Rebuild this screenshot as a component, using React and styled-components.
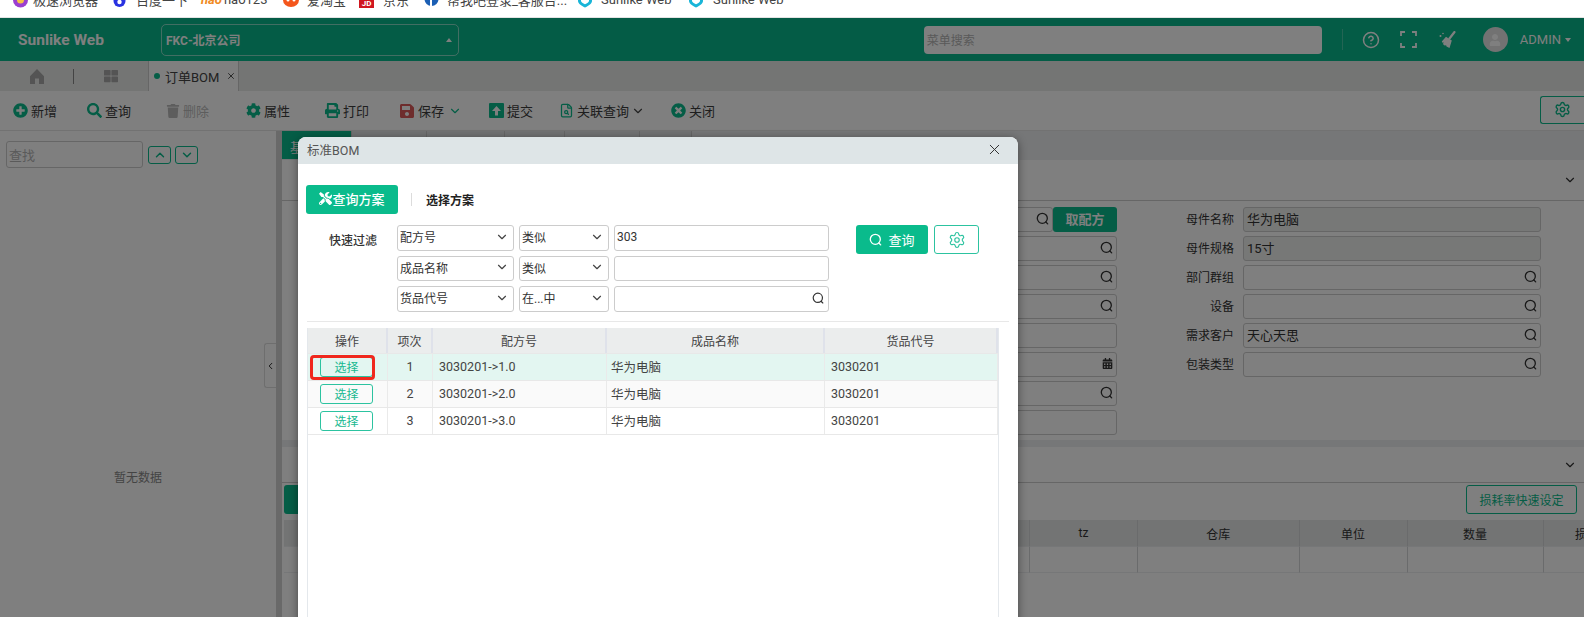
import React from "react";
import styled, { createGlobalStyle } from "styled-components";
import {
  FaPlusCircle,
  FaSearch,
  FaTrash,
  FaCog,
  FaPrint,
  FaSave,
  FaTimesCircle,
  FaThLarge,
  FaUser,
  FaTools,
  FaCalendarAlt,
} from "react-icons/fa";
import {
  ChevronDown,
  ChevronUp,
  ChevronLeft,
  CircleHelp,
  FileSearch,
  Settings,
  X,
} from "lucide-react";

const GREEN = "#0abb8c";
const FONT = `Roboto, "Noto Sans CJK SC", sans-serif`;

const GlobalStyle = createGlobalStyle`
  html, body {
    margin: 0;
    padding: 0;
    height: 100%;
    overflow: hidden;
    background: #fff;
    font-family: ${FONT};
    font-size: 12px;
    color: #3c3c3c;
  }
  * { box-sizing: border-box; }
`;

const Page = styled.div`
  width: 1584px;
  height: 617px;
  display: flex;
  flex-direction: column;
  overflow: hidden;
`;

/* browser bookmark bar, cut off by the top of the capture */
const BookmarkBar = styled.div`
  height: 18px;
  flex: none;
  overflow: hidden;
  background: #fff;
  border-bottom: 1px solid #e3e3e3;
  display: flex;
  padding-left: 13px;
`;

const Bookmark = styled.div`
  width: ${(p) => p.$w}px;
  flex: none;
  height: 20px;
  margin-top: -11px;
  display: flex;
  align-items: center;
  gap: ${(p) => p.$gap || 5}px;
  font-size: 13px;
  white-space: nowrap;
  color: #444;
`;

const HaoMark = styled.span`
  color: #f08a24;
  font-size: 13px;
  font-weight: 700;
  font-style: italic;
`;

const JdMark = styled.span`
  width: 15px;
  height: 18px;
  background: #d0161f;
  color: #fff;
  font-size: 8px;
  font-weight: 700;
  display: flex;
  align-items: flex-end;
  justify-content: center;
  flex: none;
`;

const Shell = styled.div`
  position: relative;
  flex: 1;
  min-height: 0;
  display: flex;
  flex-direction: column;
  background: #fff;
`;

const Header = styled.header`
  height: 43px;
  flex: none;
  background: #08b88c;
  display: flex;
  align-items: center;
  padding-left: 18px;
  color: #fff;
`;

const Brand = styled.div`
  width: 143px;
  font-size: 15.5px;
  font-weight: 700;
`;

const CompanySelect = styled.div`
  width: 298px;
  height: 32px;
  border: 1px solid rgba(255, 255, 255, 0.5);
  border-radius: 5px;
  display: flex;
  align-items: center;
  justify-content: space-between;
  padding: 0 6px 0 4px;
  font-size: 12px;
  font-weight: 700;
  margin-right: auto;
`;

const Caret = styled.span`
  width: 0;
  height: 0;
  border-left: 3px solid transparent;
  border-right: 3px solid transparent;
  ${(p) => (p.$up ? "border-bottom" : "border-top")}: 4px solid #fff;
`;

const MenuSearch = styled.div`
  width: 398px;
  height: 28px;
  background: #fff;
  border-radius: 4px;
  color: #b4b4b4;
  font-size: 12px;
  padding-left: 3px;
  display: flex;
  align-items: center;
`;

const HeaderDivider = styled.div`
  width: 1px;
  height: 21px;
  background: rgba(255, 255, 255, 0.25);
  margin: 0 19px 0 20px;
`;

const HeaderIcon = styled.div`
  width: 18px;
  height: 18px;
  margin-right: 20px;
  display: flex;
  align-items: center;
  justify-content: center;
`;

const Avatar = styled.div`
  width: 25px;
  height: 25px;
  border-radius: 50%;
  background: #e4e4e4;
  color: #fff;
  display: flex;
  align-items: center;
  justify-content: center;
  margin-left: 7px;
`;

const AdminName = styled.div`
  margin-left: 12px;
  font-size: 13px;
  display: flex;
  align-items: center;
  gap: 4px;
  margin-right: 13px;
`;

const TabBar = styled.div`
  height: 30px;
  flex: none;
  background: #e8ebe8;
  display: flex;
  align-items: center;
`;

const TabIconBox = styled.div`
  width: 74px;
  height: 15px;
  display: flex;
  align-items: center;
  justify-content: center;
  color: #a8a8a8;
  ${(p) => p.$line && "border-right: 1px solid #888;"}
`;

const PageTab = styled.div`
  height: 30px;
  width: 91px;
  background: #fff;
  border-left: 1px solid #ccc;
  border-right: 1px solid #ccc;
  display: flex;
  align-items: center;
  padding-left: 5px;
  gap: 5px;
  font-size: 13px;
  color: #444;
`;

const Dot = styled.span`
  width: 6px;
  height: 6px;
  border-radius: 50%;
  background: ${GREEN};
  flex: none;
`;

const Toolbar = styled.div`
  height: 40px;
  flex: none;
  background: #fff;
  display: flex;
  align-items: center;
  padding-left: 13px;
  border-bottom: 1px solid #e4e4e4;
  position: relative;
`;

const ToolItem = styled.div`
  width: ${(p) => p.$w}px;
  flex: none;
  display: flex;
  align-items: center;
  gap: 3px;
  font-size: 13px;
  color: ${(p) => (p.$off ? "#bbb" : "#3c3c3c")};
  svg.tool { color: ${(p) => p.$color || GREEN}; flex: none; }
`;

const ToolSettings = styled.div`
  margin-left: auto;
  width: 44px;
  height: 28px;
  border: 1px solid ${GREEN};
  border-right: none;
  border-radius: 3px 0 0 3px;
  color: ${GREEN};
  display: flex;
  align-items: center;
  justify-content: center;
  margin-top: -2px;
`;

const Main = styled.div`
  flex: 1;
  min-height: 0;
  display: flex;
`;

const LeftPanel = styled.aside`
  width: 276px;
  flex: none;
  display: flex;
  flex-direction: column;
  padding: 10px 6px 0;
  background: #fff;
`;

const FindRow = styled.div`
  display: flex;
  align-items: center;
  gap: 4px;
`;

const FindInput = styled.div`
  width: 137px;
  height: 27px;
  border: 1px solid #ccc;
  border-radius: 3px;
  color: #b4b4b4;
  font-size: 13px;
  padding-left: 2px;
  display: flex;
  align-items: center;
  margin-right: 1px;
`;

const StepButton = styled.div`
  width: 23px;
  height: 18px;
  border: 1px solid ${GREEN};
  border-radius: 3px;
  color: ${GREEN};
  display: flex;
  align-items: center;
  justify-content: center;
`;

const EmptyText = styled.div`
  flex: 1;
  display: flex;
  justify-content: center;
  padding-top: 300px;
  color: #888;
  font-size: 12px;
`;

const Splitter = styled.div`
  width: 6px;
  flex: none;
  background: #d2d2d2;
  position: relative;
`;

const CollapseHandle = styled.div`
  position: absolute;
  left: -12px;
  top: 212px;
  width: 12px;
  height: 45px;
  background: #fff;
  border: 1px solid #ddd;
  border-right: none;
  border-radius: 3px 0 0 3px;
  color: #222;
  display: flex;
  align-items: center;
  justify-content: center;
`;

const Content = styled.div`
  flex: 1;
  min-width: 0;
  background: #eceef0;
  display: flex;
  flex-direction: column;
  overflow: hidden;
`;

const ContentTabs = styled.div`
  height: 29px;
  flex: none;
  display: flex;
`;

const ContentTab = styled.div`
  width: ${(p) => p.$w}px;
  height: ${(p) => (p.$active ? 28 : 18)}px;
  flex: none;
  background: ${(p) => (p.$active ? GREEN : "#e4e6e8")};
  border-right: 1px solid #ccc;
  color: #fff;
  font-size: 13px;
  padding: 6px 0 0 8px;
`;

const Card = styled.section`
  background: #fff;
  flex: none;
`;

const CardTitle = styled.div`
  height: ${(p) => p.$h}px;
  border-bottom: 1px solid #ccc;
  display: flex;
  align-items: center;
  justify-content: flex-end;
  padding-right: 7px;
  color: #333;
`;

const FormGrid = styled.div`
  display: grid;
  grid-template-columns: 1fr 424px;
  grid-auto-rows: 25px;
  row-gap: 4px;
  padding: 6px 43px 5px 0;
`;

const LeftCell = styled.div`
  grid-column: 1;
  justify-self: end;
  width: 300px;
  display: flex;
`;

const FormField = styled.div`
  flex: 1;
  min-width: 0;
  height: 25px;
  border: 1px solid #ccc;
  border-radius: 3px;
  background: ${(p) => (p.$readonly ? "#eef0ee" : "#fff")};
  display: flex;
  align-items: center;
  justify-content: space-between;
  padding: 0 3px 2px 3px;
  font-size: 13px;
  color: #333;
`;

const FetchButton = styled.div`
  width: 64px;
  height: 25px;
  flex: none;
  background: ${GREEN};
  border-radius: 3px;
  color: #fff;
  font-size: 13px;
  font-weight: 700;
  padding-bottom: 2px;
  display: flex;
  align-items: center;
  justify-content: center;
`;

const RightCell = styled.div`
  grid-column: 2;
  display: flex;
  align-items: center;
`;

const FieldLabel = styled.label`
  width: 117px;
  flex: none;
  text-align: right;
  margin: 0 9px 2px 0;
  font-size: 12px;
  color: #333;
`;

const Band = styled.div`
  height: ${(p) => p.$h || 7}px;
  flex: none;
`;

const ActionRow = styled.div`
  height: 37px;
  display: flex;
  justify-content: space-between;
  align-items: flex-start;
  padding: 2px 7px 0 2px;
`;

const GreenBlock = styled.div`
  width: 60px;
  height: 29px;
  background: ${GREEN};
  border-radius: 3px;
`;

const GhostButton = styled.div`
  width: 111px;
  height: 29px;
  border: 1px solid ${GREEN};
  border-radius: 3px;
  color: ${GREEN};
  font-size: 12px;
  display: flex;
  align-items: center;
  justify-content: center;
`;

const BackTable = styled.div`
  margin-left: 2px;
  display: grid;
  grid-template-columns: 746px 108px 161.5px 108px 136px 100px;
  width: 1400px;
`;

const BackCell = styled.div`
  height: ${(p) => (p.$head ? 27 : 26)}px;
  background: ${(p) => (p.$head ? "#e6e9e9" : "#fff")};
  border-right: 1px solid #d4d6d8;
  border-bottom: 1px solid #eceef0;
  display: flex;
  align-items: center;
  justify-content: center;
  font-size: 12px;
  color: #333;
`;

const Overlay = styled.div`
  position: absolute;
  inset: 0;
  background: rgba(0, 0, 0, 0.5);
`;

const Modal = styled.div`
  width: 720px;
  height: 600px;
  margin: 119px 0 0 298px;
  background: #fff;
  border-radius: 8px 8px 0 0;
  box-shadow: 0 2px 10px rgba(0, 0, 0, 0.45);
`;

const ModalHeader = styled.div`
  height: 27px;
  background: #dee5e7;
  border-radius: 8px 8px 0 0;
  display: flex;
  align-items: center;
  justify-content: space-between;
  padding: 0 15px 3px 9px;
  font-size: 12.5px;
  color: #555;
`;

const SchemeTabs = styled.div`
  display: flex;
  align-items: center;
  margin: 21px 0 0 8px;
`;

const SchemeActive = styled.div`
  width: 92px;
  height: 29px;
  background: ${GREEN};
  border-radius: 3px;
  color: #fff;
  font-size: 13px;
  font-weight: 500;
  padding-bottom: 2px;
  display: flex;
  align-items: center;
  justify-content: center;
`;

const SchemeDivider = styled.div`
  width: 1px;
  height: 13px;
  background: #dcdcdc;
  margin: 0 14px 0 13px;
`;

const SchemeLink = styled.div`
  font-size: 12px;
  font-weight: 700;
  color: #222;
  padding-bottom: 1px;
`;

const FilterArea = styled.div`
  display: flex;
  margin: 11px 0 0 31px;
  padding-bottom: 9px;
`;

const FilterLabel = styled.div`
  width: 68px;
  flex: none;
  padding-top: 6px;
  font-size: 12px;
  font-weight: 500;
  color: #333;
`;

const FilterRows = styled.div`
  display: flex;
  flex-direction: column;
  gap: 5px;
`;

const FilterRow = styled.div`
  display: flex;
  gap: 5px;
`;

const SelectBox = styled.div`
  width: ${(p) => p.$w}px;
  height: 25.5px;
  border: 1px solid #ccc;
  border-radius: 3px;
  display: flex;
  align-items: center;
  justify-content: space-between;
  padding: 0 4px 2px 2px;
  font-size: 12px;
  color: #333;
`;

const FilterActions = styled.div`
  display: flex;
  gap: 6px;
  margin-left: 27px;
`;

const QueryButton = styled.div`
  width: 72px;
  height: 29px;
  background: ${GREEN};
  border-radius: 3px;
  color: #fff;
  font-size: 13px;
  display: flex;
  align-items: center;
  justify-content: center;
  gap: 6px;
`;

const GearButton = styled.div`
  width: 45px;
  height: 29px;
  border: 1px solid #2cc3a0;
  border-radius: 3px;
  color: #2cc3a0;
  display: flex;
  align-items: center;
  justify-content: center;
`;

const ModalDivider = styled.div`
  height: 1px;
  background: #e8e8e8;
  margin: 0 9px;
`;

const TableWrap = styled.div`
  margin: 6px 0 0 9px;
  width: 692px;
  height: 300px;
  border-left: 1px solid #e4e8ec;
  border-right: 1px solid #e4e8ec;
`;

const TableRow = styled.div`
  display: grid;
  grid-template-columns: 80px 45px 174px 218px 1fr;
  height: ${(p) => (p.$head ? 26 : 27)}px;
  background: ${(p) => p.$bg || "#fff"};
  border-bottom: 1px solid #e8e8e8;
`;

const HeadCell = styled.div`
  background: #ebeded;
  border-right: 2px solid #dfe2ea;
  display: flex;
  align-items: center;
  justify-content: center;
  font-size: 12px;
  color: #444;
`;

const Cell = styled.div`
  position: relative;
  border-right: 1px solid #eaeaea;
  display: flex;
  align-items: center;
  justify-content: ${(p) => (p.$center ? "center" : "flex-start")};
  padding-left: ${(p) => (p.$center ? 0 : p.$pad || 6)}px;
  font-size: 12.5px;
  color: #444;
`;

const PickButton = styled.div`
  width: 53px;
  height: 20px;
  margin-right: 2px;
  border: 1px solid #2cc3a0;
  border-radius: 3px;
  color: #18b890;
  font-size: 12px;
  display: flex;
  align-items: center;
  justify-content: center;
`;

const RedMark = styled.div`
  position: absolute;
  left: 2px;
  top: 1px;
  width: 65px;
  height: 25px;
  border: 3px solid #f0281e;
  border-radius: 4px;
  pointer-events: none;
`;

const Lens = ({ size = 13 }) => (
  <svg width={size} height={size} viewBox="0 0 14 14" fill="none" stroke="currentColor" strokeWidth="1.4">
    <circle cx="6.800" cy="6.800" r="5.400" />
    <path d="M10.600 10.800 12.600 12.800" strokeLinecap="round" />
  </svg>
);

const Shield = () => (
  <svg width="16" height="18" viewBox="0 0 16 18">
    <path d="M1 1h14v10c0 3-4 5-7 6.500C5 16 1 14 1 11z" fill="#19b5d8" />
    <path d="M4 6h8v5c0 1-2 2.500-4 3.200C6 13.500 4 12 4 11z" fill="#fff" />
  </svg>
);

const SubmitIcon = () => (
  <svg className="tool" width="15" height="15" viewBox="0 0 15 15">
    <rect width="15" height="15" rx="1" fill="currentColor" />
    <path d="M7.500 3 12 8H9v4.500H6V8H3z" fill="#fff" />
  </svg>
);

const FullscreenIcon = () => (
  <svg width="17" height="17" viewBox="0 0 17 17" fill="none" stroke="currentColor" strokeWidth="1.800">
    <path d="M1 5V1h4M12 1h4v4M16 12v4h-4M5 16H1v-4" />
  </svg>
);

const BroomIcon = () => (
  <svg width="18" height="18" viewBox="0 0 18 18" fill="currentColor">
    <path d="M16.500 1 11.500 7.500" stroke="currentColor" strokeWidth="2.200" fill="none" strokeLinecap="round" />
    <path d="M8 5.800 13.800 9.600 11.500 17 8.500 15.500 8 14 7 14.800 4.800 13 6 11.500 4.500 11.800 3.800 10.500Z" />
    <circle cx="2.500" cy="5" r="1" />
    <circle cx="5" cy="2.500" r="0.800" />
  </svg>
);

const HomeIcon = () => (
  <svg width="16" height="17" viewBox="0 0 16 17" fill="currentColor">
    <path d="M8 1 15 8.200V16H10V10.500H6V16H1V8.200Z" />
  </svg>
);

const bookmarks = [
  { w: 100, label: "极速浏览器", icon: (
    <svg width="15" height="18" viewBox="0 0 15 18">
      <circle cx="7.500" cy="10" r="7.500" fill="#9a3fd0" />
      <circle cx="7.500" cy="10" r="3.500" fill="#f6c344" />
    </svg>
  ) },
  { w: 88, label: "百度一下", gap: 10, icon: (
    <svg width="13" height="18" viewBox="0 0 13 18">
      <circle cx="6.500" cy="11" r="6" fill="#2932e1" />
      <circle cx="6.500" cy="12" r="2.200" fill="#fff" />
    </svg>
  ) },
  { w: 82, label: "hao123", gap: 2, icon: <HaoMark>hao</HaoMark> },
  { w: 76, label: "爱淘宝", gap: 8, icon: (
    <svg width="16" height="18" viewBox="0 0 16 18">
      <ellipse cx="8" cy="10" rx="8" ry="7" fill="#f4561c" />
      <circle cx="5" cy="10" r="1.500" fill="#fff" />
      <circle cx="11" cy="10" r="1.500" fill="#fff" />
    </svg>
  ) },
  { w: 65, label: "京东", gap: 9, icon: <JdMark>JD</JdMark> },
  { w: 153, label: "帮我吧登录_客服台...", gap: 8, icon: (
    <svg width="15" height="18" viewBox="0 0 15 18">
      <circle cx="7.500" cy="9" r="7" fill="#1c5fb4" />
      <path d="M6 5h4v5H8v6H6z" fill="#fff" />
    </svg>
  ) },
  { w: 111, label: "Sunlike Web", gap: 8, icon: <Shield /> },
  { w: 110, label: "Sunlike Web", gap: 9, icon: <Shield /> },
];

const toolItems = [
  { w: 74, label: "新增", icon: <FaPlusCircle className="tool" size={15} /> },
  { w: 79, label: "查询", icon: <FaSearch className="tool" size={15} /> },
  { w: 80, label: "删除", off: true, color: "#bbb", icon: <FaTrash className="tool" size={14} /> },
  { w: 79, label: "属性", icon: <FaCog className="tool" size={15} /> },
  { w: 74, label: "打印", icon: <FaPrint className="tool" size={15} /> },
  { w: 90, label: "保存", color: "#dc5a5a", icon: <FaSave className="tool" size={16} />, arrow: GREEN, arrowGap: 1 },
  { w: 70, label: "提交", icon: <SubmitIcon /> },
  { w: 112, label: "关联查询", icon: <FileSearch className="tool" size={15} />, arrow: "#444", arrowGap: -1 },
  { w: 60, label: "关闭", icon: <FaTimesCircle className="tool" size={15} /> },
];

const formRight = [
  { label: "母件名称", value: "华为电脑", readonly: true },
  { label: "母件规格", value: "15寸", readonly: true },
  { label: "部门群组", lens: true },
  { label: "设备", lens: true },
  { label: "需求客户", value: "天心天思", lens: true },
  { label: "包装类型", lens: true },
];

const formLeft = ["lens", "lens", "lens", "lens", "", "date", "lens", ""];

const filters = [
  { field: "配方号", op: "类似", value: "303" },
  { field: "成品名称", op: "类似" },
  { field: "货品代号", op: "在...中", lens: true },
];

const rows = [
  { no: 1, bom: "3030201->1.0", bg: "#e3f6f1", marked: true },
  { no: 2, bom: "3030201->2.0", bg: "#fafafa" },
  { no: 3, bom: "3030201->3.0" },
];

const App = () => {
  return (
    <Page>
      <GlobalStyle />
      <BookmarkBar>
        {bookmarks.map((b, i) => (
          <Bookmark key={i} $w={b.w} $gap={b.gap}>
            {b.icon}
            {b.label}
          </Bookmark>
        ))}
      </BookmarkBar>
      <Shell>
        <Header>
          <Brand>Sunlike Web</Brand>
          <CompanySelect>
            FKC-北京公司
            <Caret $up />
          </CompanySelect>
          <MenuSearch>菜单搜索</MenuSearch>
          <HeaderDivider />
          <HeaderIcon>
            <CircleHelp size={18} />
          </HeaderIcon>
          <HeaderIcon>
            <FullscreenIcon />
          </HeaderIcon>
          <HeaderIcon>
            <BroomIcon />
          </HeaderIcon>
          <Avatar>
            <FaUser size={12} />
          </Avatar>
          <AdminName>
            ADMIN
            <Caret />
          </AdminName>
        </Header>

        <TabBar>
          <TabIconBox $line>
            <HomeIcon />
          </TabIconBox>
          <TabIconBox>
            <FaThLarge size={14} />
          </TabIconBox>
          <PageTab>
            <Dot />
            订单BOM
            <X size={10} color="#333" style={{ marginLeft: 2 }} />
          </PageTab>
        </TabBar>

        <Toolbar>
          {toolItems.map((t) => (
            <ToolItem key={t.label} $w={t.w} $off={t.off} $color={t.color}>
              {t.icon}
              {t.label}
              {t.arrow && <ChevronDown size={14} color={t.arrow} style={{ marginLeft: t.arrowGap }} />}
            </ToolItem>
          ))}
          <ToolSettings>
            <Settings size={17} />
          </ToolSettings>
        </Toolbar>

        <Main>
          <LeftPanel>
            <FindRow>
              <FindInput>查找</FindInput>
              <StepButton>
                <ChevronUp size={14} strokeWidth={2.5} />
              </StepButton>
              <StepButton>
                <ChevronDown size={14} strokeWidth={2.5} />
              </StepButton>
            </FindRow>
            <EmptyText>暂无数据</EmptyText>
          </LeftPanel>
          <Splitter>
            <CollapseHandle>
              <ChevronLeft size={16} />
            </CollapseHandle>
          </Splitter>
          <Content>
            <ContentTabs>
              <ContentTab $active $w={70}>基本信息</ContentTab>
              <ContentTab $w={75} />
              <ContentTab $w={78} />
              <ContentTab $w={60} />
              <ContentTab $w={75} />
              <ContentTab $w={52} />
            </ContentTabs>
            <Card>
              <CardTitle $h={41}>
                <ChevronDown size={14} />
              </CardTitle>
              <FormGrid>
                {formLeft.map((kind, i) => (
                  <LeftCell key={i} style={{ gridRow: i + 1 }}>
                    <FormField>
                      <span />
                      {kind === "lens" && <Lens />}
                      {kind === "date" && <FaCalendarAlt size={11} />}
                    </FormField>
                    {i === 0 && <FetchButton>取配方</FetchButton>}
                  </LeftCell>
                ))}
                {formRight.map((f, i) => (
                  <RightCell key={f.label} style={{ gridRow: i + 1 }}>
                    <FieldLabel>{f.label}</FieldLabel>
                    <FormField $readonly={f.readonly}>
                      <span>{f.value}</span>
                      {f.lens && <Lens />}
                    </FormField>
                  </RightCell>
                ))}
              </FormGrid>
            </Card>
            <Band />
            <Card>
              <CardTitle $h={36}>
                <ChevronDown size={14} />
              </CardTitle>
              <ActionRow>
                <GreenBlock />
                <GhostButton>损耗率快速设定</GhostButton>
              </ActionRow>
              <BackTable>
                <BackCell $head />
                <BackCell $head>tz</BackCell>
                <BackCell $head>仓库</BackCell>
                <BackCell $head>单位</BackCell>
                <BackCell $head>数量</BackCell>
                <BackCell $head>损耗率</BackCell>
                <BackCell />
                <BackCell />
                <BackCell />
                <BackCell />
                <BackCell />
                <BackCell />
              </BackTable>
              <Band $h={60} />
            </Card>
          </Content>
        </Main>

        <Overlay>
          <Modal>
            <ModalHeader>
              标准BOM
              <X size={17} color="#333" strokeWidth={1.4} />
            </ModalHeader>
            <SchemeTabs>
              <SchemeActive>
                <FaTools size={13} />
                查询方案
              </SchemeActive>
              <SchemeDivider />
              <SchemeLink>选择方案</SchemeLink>
            </SchemeTabs>
            <FilterArea>
              <FilterLabel>快速过滤</FilterLabel>
              <FilterRows>
                {filters.map((f) => (
                  <FilterRow key={f.field}>
                    <SelectBox $w={117}>
                      {f.field}
                      <ChevronDown size={14} color="#444" />
                    </SelectBox>
                    <SelectBox $w={90}>
                      {f.op}
                      <ChevronDown size={14} color="#444" />
                    </SelectBox>
                    <SelectBox $w={215}>
                      <span>{f.value}</span>
                      {f.lens && <Lens size={12} />}
                    </SelectBox>
                  </FilterRow>
                ))}
              </FilterRows>
              <FilterActions>
                <QueryButton>
                  <Lens size={13} />
                  查询
                </QueryButton>
                <GearButton>
                  <Settings size={18} strokeWidth={1.5} />
                </GearButton>
              </FilterActions>
            </FilterArea>
            <ModalDivider />
            <TableWrap>
              <TableRow $head>
                <HeadCell>操作</HeadCell>
                <HeadCell>项次</HeadCell>
                <HeadCell>配方号</HeadCell>
                <HeadCell>成品名称</HeadCell>
                <HeadCell>货品代号</HeadCell>
              </TableRow>
              {rows.map((r) => (
                <TableRow key={r.no} $bg={r.bg}>
                  <Cell $center>
                    <PickButton>选择</PickButton>
                    {r.marked && <RedMark />}
                  </Cell>
                  <Cell $center>{r.no}</Cell>
                  <Cell>{r.bom}</Cell>
                  <Cell $pad={4}>华为电脑</Cell>
                  <Cell>3030201</Cell>
                </TableRow>
              ))}
            </TableWrap>
          </Modal>
        </Overlay>
      </Shell>
    </Page>
  );
};

export default App;
